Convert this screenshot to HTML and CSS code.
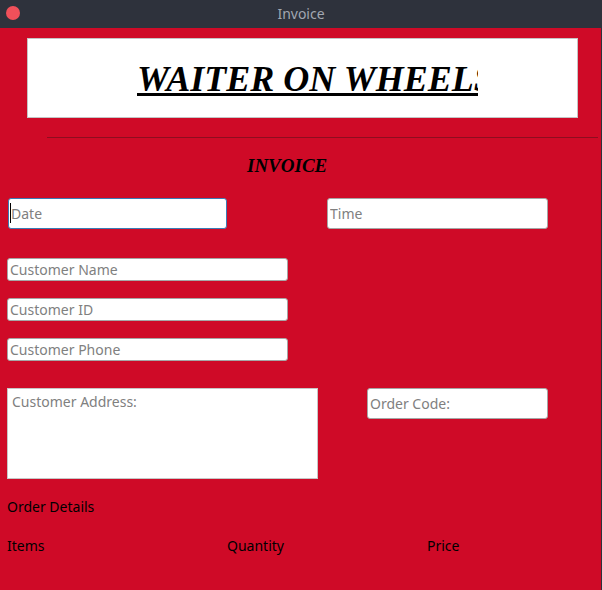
FILE: index.html
```html
<!DOCTYPE html>
<html>
<head>
<meta charset="utf-8">
<link rel="stylesheet" href="styles.css">
</head>
<body>
<div class="titlebar">
  <span class="close-dot"></span>
  <span class="win-title">Invoice</span>
</div>
<div class="window">
  <div class="brand-box">
    <span class="brand">WAITER ON WHEELS</span>
  </div>
  <div class="separator"></div>
  <div class="invoice-title">INVOICE</div>

  <div class="row-datetime">
    <span class="caret-wrap"><input class="field date" type="text" placeholder="Date"></span>
    <input class="field time" type="text" placeholder="Time">
  </div>

  <div class="customer-col">
    <input class="field small" type="text" placeholder="Customer Name">
    <input class="field small" type="text" placeholder="Customer ID">
    <input class="field small" type="text" placeholder="Customer Phone">
  </div>

  <div class="row-address">
    <textarea class="address" placeholder="Customer Address:"></textarea>
    <input class="field order-code" type="text" placeholder="Order Code:">
  </div>

  <div class="section-label">Order Details</div>
  <div class="order-head">
    <span>Items</span>
    <span>Quantity</span>
    <span>Price</span>
  </div>
</div>
</body>
</html>
```
FILE: styles.css
```css
html, body {
  margin: 0;
  padding: 0;
  background: #cf0a27;
  height: 100%;
  overflow: hidden;
}

body {
  font-family: "Noto Sans", "Open Sans", sans-serif;
  font-size: 14px;
  color: #000;
}

.titlebar {
  height: 28px;
  background: #2e323c;
  position: relative;
  display: flex;
  align-items: center;
  justify-content: center;
}

.close-dot {
  position: absolute;
  left: 6px;
  top: 6px;
  width: 14px;
  height: 14px;
  border-radius: 50%;
  background: #f0505a;
}

.win-title {
  color: #a2a7b1;
  font-size: 14px;
  line-height: 28px;
}

.window {
  height: 562px;
  box-sizing: border-box;
  border-right: 1px solid #2e323c;
  padding-top: 10px;
}

.brand-box {
  margin-left: 27px;
  width: 551px;
  height: 80px;
  box-sizing: border-box;
  background: #fff;
  border: 1px solid #c4c4c4;
  display: flex;
  align-items: center;
}

.brand {
  margin-left: 109px;
  width: 341px;
  overflow: hidden;
  white-space: nowrap;
  font-family: "Liberation Serif", "Times New Roman", serif;
  font-weight: bold;
  font-style: italic;
  font-size: 36px;
  line-height: 40px;
  padding-top: 2px;
  text-decoration: underline;
  text-decoration-thickness: 3px;
  text-underline-offset: 2px;
}

.separator {
  margin-top: 19px;
  margin-left: 47px;
  width: 551px;
  height: 1px;
  background: #8e0d1f;
}

.invoice-title {
  margin-top: 17px;
  margin-left: 247px;
  font-family: "Liberation Serif", "Times New Roman", serif;
  font-weight: bold;
  font-style: italic;
  font-size: 19px;
  line-height: 22px;
  height: 22px;
}

.field {
  box-sizing: border-box;
  font-family: "Noto Sans", "Open Sans", sans-serif;
  font-size: 14px;
  background: #fff;
  border: 1px solid #a6a6a6;
  border-radius: 3px;
  padding: 0 2px;
  margin: 0;
  outline: none;
  color: #000;
}

.field::placeholder,
.address::placeholder {
  color: #808080;
  opacity: 1;
}

.row-datetime {
  margin-top: 21px;
  display: flex;
  padding-left: 8px;
}

.caret-wrap {
  position: relative;
  display: block;
}

.caret-wrap::after {
  content: "";
  position: absolute;
  left: 2px;
  top: 5px;
  width: 1px;
  height: 20px;
  background: #000;
}

.date {
  display: block;
  width: 219px;
  height: 31px;
  border-color: #3b7bb5;
  padding-left: 2px;
}

.time {
  margin-left: 100px;
  width: 221px;
  height: 31px;
}

.customer-col {
  margin-top: 29px;
  padding-left: 7px;
  display: flex;
  flex-direction: column;
  gap: 17px;
}

.small {
  width: 281px;
  height: 23px;
}

.row-address {
  margin-top: 27px;
  padding-left: 7px;
  display: flex;
  align-items: flex-start;
  gap: 49px;
}

.address {
  box-sizing: border-box;
  width: 311px;
  height: 91px;
  margin: 0;
  border: 1px solid #c6c6c6;
  border-radius: 0;
  padding: 3px 4px;
  font-family: "Noto Sans", "Open Sans", sans-serif;
  font-size: 14px;
  line-height: 19px;
  resize: none;
  outline: none;
  background: #fff;
  display: block;
}

.order-code {
  width: 181px;
  height: 31px;
}

.section-label {
  margin-top: 18px;
  padding-left: 7px;
  line-height: 19px;
}

.order-head {
  margin-top: 20px;
  padding-left: 7px;
  display: grid;
  grid-template-columns: 220px 200px auto;
  line-height: 19px;
}
```
